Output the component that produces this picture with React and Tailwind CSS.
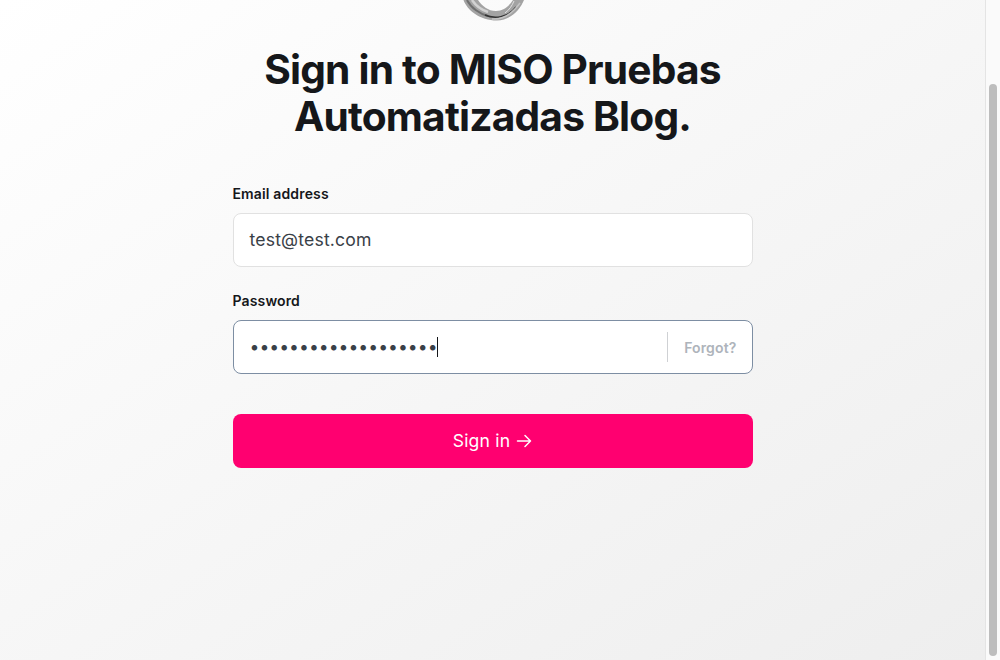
function Logo() {
  return (
    <svg width="70" height="22" viewBox="0 0 70 22" fill="none" className="block">
      <path d="M5.500 0 C9 10 22 20.500 39 20.500 C52 20.500 62 10 66 0 L55 0 C51 6 46 11 38 11 C30 11 24 6 20 0 Z" fill="#a3a3a3" />
      <path d="M9 0 C13 8 22 14 30 16" stroke="#6f6f6f" strokeWidth="2" />
      <path d="M14 0 C18 6 24 10 30 12" stroke="#d2d2d2" strokeWidth="2.500" />
      <path d="M27 15 C36 19 50 18 58 7" stroke="#333333" strokeWidth="1.500" />
      <path d="M34 19 C44 20 54 14 62 3" stroke="#c4c4c4" strokeWidth="1.500" />
      <path d="M47 13 C51 10 54 6 56 1" stroke="#e2e2e2" strokeWidth="1" />
    </svg>
  );
}

function App() {
  return (
    <div className="flex h-[660px] w-[1000px] overflow-hidden font-['Inter',sans-serif]">
      <main className="flex flex-1 flex-col items-center bg-gradient-to-br from-white to-[#eeeeee]">
        <Logo />

        <h1 className="mt-[24px] text-center text-[40.7px] font-bold leading-[47px] tracking-[-0.02em] text-[#15171a]">
          Sign in to MISO Pruebas
          <br />
          Automatizadas Blog.
        </h1>

        <form className="mt-[45px] flex w-[520px] flex-col">
          {/* Email */}
          <label className="mb-[10px] text-[14px] font-semibold leading-[18px] tracking-[0.01em] text-[#15171a]">
            Email address
          </label>
          <div className="flex h-[54px] items-center rounded-lg border border-[#e1e1e1] bg-white px-4 text-[17.6px] tracking-[0.01em] text-[#394047]">
            test@test.com
          </div>

          {/* Password */}
          <label className="mb-[10px] mt-[25px] text-[14px] font-semibold leading-[18px] tracking-[0.01em] text-[#15171a]">
            Password
          </label>
          <div className="flex h-[54px] items-center rounded-lg border border-[#7d8ea3] bg-white pl-4 text-[#394047]">
            <div className="flex flex-1 items-center">
              <span className="text-[17.6px] leading-[20px]">•••••••••••••••••••</span>
              <span className="-ml-px h-[20px] w-px bg-[#15171a]"></span>
            </div>
            <div className="flex h-[30px] items-center border-l border-[#cfd1d4] pl-4 pr-[15px] text-[14px] font-semibold tracking-[0.01em] text-[#aeb4bb]">
              Forgot?
            </div>
          </div>

          {/* Button */}
          <button
            type="button"
            className="mt-10 flex h-[54px] items-center justify-center gap-[6px] rounded-lg bg-[#ff0070] text-[17.6px] tracking-[0.01em] text-white"
          >
            Sign in
            <svg width="16" height="16" viewBox="0 0 16 16" fill="none" stroke="currentColor" strokeWidth="1.500" strokeLinecap="round" strokeLinejoin="round">
              <path d="M1.500 8h13M9 2.500 14.500 8 9 13.500" />
            </svg>
          </button>
        </form>
      </main>

      {/* scrollbar */}
      <div className="flex w-[15px] justify-center border-l border-[#e4e4e4] bg-[#fafafa] pt-[84px]">
        <div className="h-[572px] w-[8px] rounded-full bg-[#bdbdbd]"></div>
      </div>
    </div>
  );
}

export default App;
